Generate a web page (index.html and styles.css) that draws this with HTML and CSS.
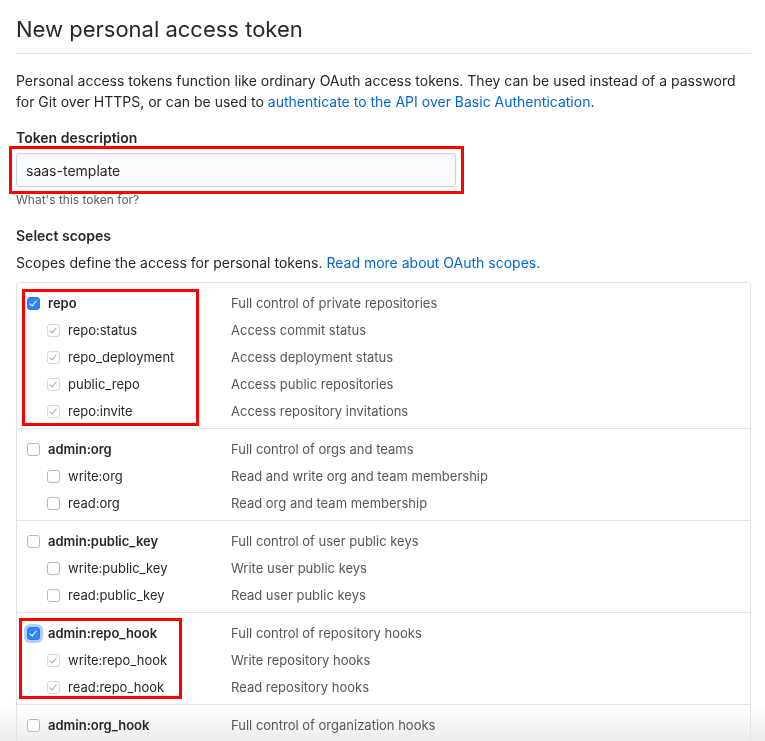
FILE: index.html
```html
<!DOCTYPE html>
<html>
<head>
<meta charset="utf-8">
<link rel="stylesheet" href="styles.css">
</head>
<body>
<div class="fade"></div>
<div class="page">
  <h1 class="title">New personal access token</h1>
  <p class="intro">Personal access tokens function like ordinary OAuth access tokens. They can be used instead of a password for Git over HTTPS, or can be used to <a href="#">authenticate to the API over Basic Authentication</a>.</p>

  <div class="field">
    <label class="field-label">Token description</label>
    <div class="input-wrap">
      <div class="input">saas-template</div>
      <div class="mark mark-input"></div>
    </div>
    <div class="note">What's this token for?</div>
  </div>

  <div class="field-label scopes-label">Select scopes</div>
  <p class="scopes-intro">Scopes define the access for personal tokens. <a href="#">Read more about OAuth scopes.</a></p>

  <div class="scopes">
    <div class="group">
      <div class="mark mark-repo"></div>
      <div class="row top"><span class="cb cb-on"></span><span class="name">repo</span><span class="desc">Full control of private repositories</span></div>
      <div class="row sub"><span class="cb cb-dis"></span><span class="name">repo:status</span><span class="desc">Access commit status</span></div>
      <div class="row sub"><span class="cb cb-dis"></span><span class="name">repo_deployment</span><span class="desc">Access deployment status</span></div>
      <div class="row sub"><span class="cb cb-dis"></span><span class="name">public_repo</span><span class="desc">Access public repositories</span></div>
      <div class="row sub"><span class="cb cb-dis"></span><span class="name">repo:invite</span><span class="desc">Access repository invitations</span></div>
    </div>
    <div class="group">
      <div class="row top"><span class="cb"></span><span class="name">admin:org</span><span class="desc">Full control of orgs and teams</span></div>
      <div class="row sub"><span class="cb"></span><span class="name">write:org</span><span class="desc">Read and write org and team membership</span></div>
      <div class="row sub"><span class="cb"></span><span class="name">read:org</span><span class="desc">Read org and team membership</span></div>
    </div>
    <div class="group">
      <div class="row top"><span class="cb"></span><span class="name">admin:public_key</span><span class="desc">Full control of user public keys</span></div>
      <div class="row sub"><span class="cb"></span><span class="name">write:public_key</span><span class="desc">Write user public keys</span></div>
      <div class="row sub"><span class="cb"></span><span class="name">read:public_key</span><span class="desc">Read user public keys</span></div>
    </div>
    <div class="group">
      <div class="mark mark-hook"></div>
      <div class="row top"><span class="cb cb-on cb-focus"></span><span class="name">admin:repo_hook</span><span class="desc">Full control of repository hooks</span></div>
      <div class="row sub"><span class="cb cb-dis"></span><span class="name">write:repo_hook</span><span class="desc">Write repository hooks</span></div>
      <div class="row sub"><span class="cb cb-dis"></span><span class="name">read:repo_hook</span><span class="desc">Read repository hooks</span></div>
    </div>
    <div class="group">
      <div class="row top"><span class="cb"></span><span class="name">admin:org_hook</span><span class="desc">Full control of organization hooks</span></div>
    </div>
  </div>
</div>
</body>
</html>
```

FILE: styles.css
```css
html {
  background: #fff;
}
html, body {
  margin: 0;
  padding: 0;
}
body {
  font-family: Inter, "Liberation Sans", sans-serif;
  font-size: 14px;
  line-height: 21px;
  color: #24292e;
  overflow: hidden;
}
a {
  color: #0366d6;
  text-decoration: none;
}
.page {
  padding: 0 14px 0 16px;
}
.title {
  margin: 0;
  padding: 13px 0 8px;
  font-size: 22px;
  line-height: 32px;
  font-weight: 400;
  border-bottom: 1px solid #e1e4e8;
}
.intro {
  margin: 16px 0 15px;
}
.field-label {
  display: block;
  font-weight: 600;
  line-height: 21px;
}
.input-wrap {
  position: relative;
  margin: 5px 295px 0 0;
}
.input {
  box-sizing: border-box;
  height: 34px;
  border: 1px solid #d1d5da;
  border-radius: 3px;
  background: #fafbfc;
  padding: 7px 9px 5px;
  font-size: 14px;
  line-height: 20px;
  box-shadow: inset 0 1px 2px rgba(27,31,35,0.075);
}
.note {
  font-size: 12px;
  line-height: 18px;
  color: #586069;
  margin-top: 4px;
}
.mark {
  position: absolute;
  border: 3px solid #f00;
  pointer-events: none;
}
.mark-input {
  left: -7px;
  top: -7px;
  right: -8px;
  bottom: -7px;
}
.scopes-label {
  margin-top: 16px;
}
.scopes-intro {
  margin: 6px 0 9px;
}
.scopes {
  border: 1px solid #e1e4e8;
  border-radius: 3px;
  font-size: 13px;
}
.group {
  position: relative;
  padding: 5px 0;
  border-top: 1px solid #e1e4e8;
}
.group:first-child {
  border-top: 0;
}
.row {
  display: flex;
  align-items: center;
  box-sizing: border-box;
  height: 27px;
  padding-top: 4px;
}
.row.top {
  padding-left: 10px;
}
.row.sub {
  padding-left: 30px;
}
.row.top .name {
  font-weight: 600;
  width: 183px;
}
.row.sub .name {
  width: 163px;
}
.desc {
  color: #51585f;
}
.cb {
  position: relative;
  box-sizing: border-box;
  width: 13px;
  height: 13px;
  border: 1px solid #b6b9bd;
  border-radius: 3px;
  background: #fff;
  margin-right: 8px;
  flex: none;
}
.cb::after {
  content: "";
  position: absolute;
  display: none;
  left: 3px;
  top: 1px;
  width: 3px;
  height: 6px;
  border: solid #fff;
  border-width: 0 1.5px 1.5px 0;
  transform: rotate(40deg);
}
.cb-on {
  background: #2f86f6;
  border-color: #2a7ae2;
}
.cb-on::after {
  display: block;
}
.cb-dis {
  border-color: #d6d8db;
  background: #fff;
}
.cb-dis::after {
  display: block;
  border-color: #a5a8ad;
}
.cb-focus {
  box-shadow: 0 0 0 3px rgba(80, 150, 240, 0.45);
}
.mark-repo {
  left: 5px;
  top: 6px;
  width: 171px;
  height: 131px;
}
.mark-hook {
  left: 2px;
  top: 5px;
  width: 157px;
  height: 75px;
}
.fade {
  position: fixed;
  z-index: -1;
  left: 0;
  right: 0;
  bottom: 0;
  height: 36px;
  background: linear-gradient(to bottom, rgba(240,240,240,0), #ededed);
  pointer-events: none;
}
```
